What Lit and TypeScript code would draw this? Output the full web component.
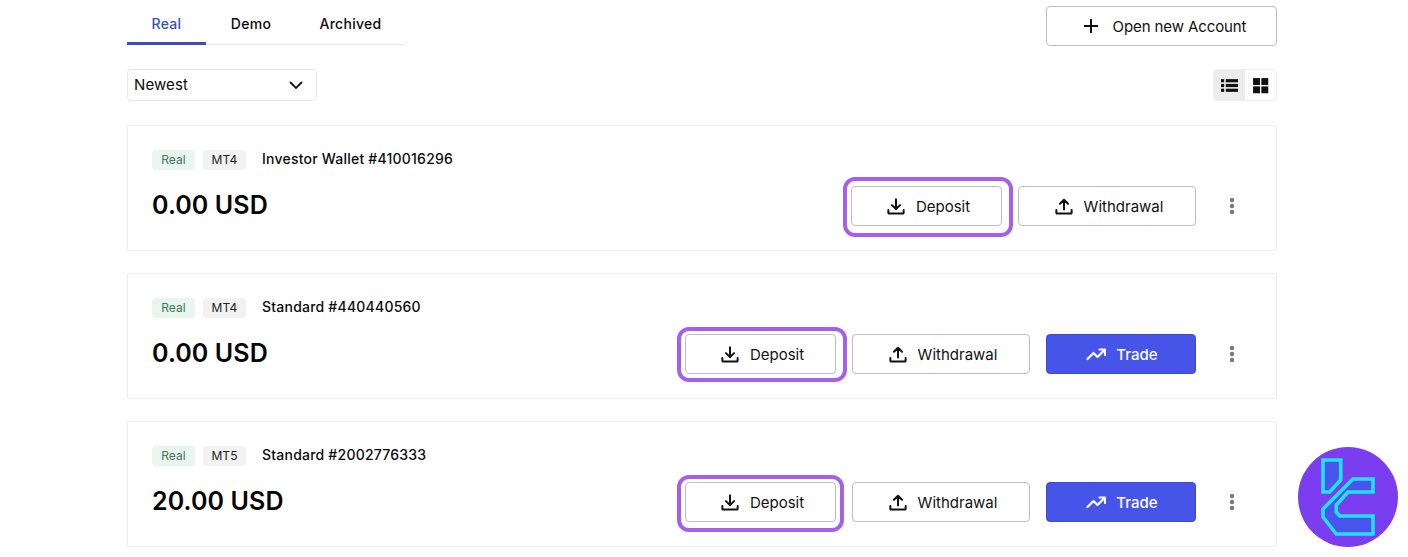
import { LitElement, html, css, svg } from "lit";
import { customElement } from "lit/decorators.js";

const downloadIcon = svg`<path d="M10 2.500v11M5.500 9l4.500 4.500L14.500 9M1.500 14.500V17.500a.8.8 0 0 0 .8.8h15.400a.8.8 0 0 0 .8-.8v-3" fill="none" stroke="currentColor" stroke-width="2.200" stroke-linecap="round" stroke-linejoin="round"/>`;
const uploadIcon = svg`<path d="M10 14V3M5.500 7.500L10 3l4.500 4.500M1.500 14.500V17.500a.8.8 0 0 0 .8.8h15.400a.8.8 0 0 0 .8-.8v-3" fill="none" stroke="currentColor" stroke-width="2.200" stroke-linecap="round" stroke-linejoin="round"/>`;
const trendIcon = svg`<path d="M1.500 15l6-6 4 4 7-7M13.500 5.500h5.500v5.500" fill="none" stroke="currentColor" stroke-width="2.200" stroke-linecap="round" stroke-linejoin="round"/>`;

interface Account {
  type: string;
  title: string;
  balance: string;
  trade: boolean;
  ringWidth: number;
  ringTall: number;
  ringTop: number;
}

const ACCOUNTS: Account[] = [
  { type: "MT4", title: "Investor Wallet #410016296", balance: "0.00 USD", trade: false, ringWidth: 170, ringTall: 60, ringTop: -9 },
  { type: "MT4", title: "Standard #440440560", balance: "0.00 USD", trade: true, ringWidth: 170, ringTall: 55, ringTop: -7 },
  { type: "MT5", title: "Standard #2002776333", balance: "20.00 USD", trade: true, ringWidth: 167, ringTall: 57, ringTop: -7 },
];

@customElement("app-root")
export class AppRoot extends LitElement {
  static styles = css`
    :host {
      display: block;
      position: relative;
      width: 1408px;
      height: 557px;
      overflow: hidden;
      background: #fff;
      color: #0b0b0b;
      font-family: Inter, "Noto Sans", sans-serif;
      font-size: 14px;
    }
    .page {
      display: flex;
      flex-direction: column;
      padding: 6px 131px 0 127px;
    }
    .top {
      display: flex;
      justify-content: space-between;
      align-items: flex-start;
    }
    .tabs {
      display: flex;
      width: 278px;
      height: 38px;
      border-bottom: 1px solid #e9e9e9;
      box-sizing: content-box;
    }
    .tab {
      height: 36px;
      line-height: 36px;
      text-align: center;
      font-weight: 500;
      font-size: 14px;
      letter-spacing: 0.3px;
    }
    .tab.real {
      width: 79px;
      color: #3d50b0;
      border-bottom: 3px solid #3d50b0;
      margin-bottom: -1px;
    }
    .tab.demo { width: 90px; }
    .tab.arch { width: 109px; }
    .btn {
      display: flex;
      align-items: center;
      justify-content: center;
      box-sizing: border-box;
      height: 40px;
      padding-left: 4px;
      border: 1px solid #bdbdbd;
      border-radius: 4px;
      background: #fff;
      gap: 11px;
      font-size: 15px;
      color: #111;
    }
    .btn svg { width: 18px; height: 18px; display: block; }
    .open {
      width: 231px;
      gap: 12px;
      letter-spacing: -0.1px;
    }
    .btn.open svg { width: 20px; height: 20px; }
    .controls {
      display: flex;
      justify-content: space-between;
      margin-top: 23px;
    }
    .select {
      display: flex;
      align-items: center;
      justify-content: space-between;
      box-sizing: border-box;
      width: 190px;
      height: 32px;
      padding: 0 12px 2px 6px;
      border: 1px solid #e7e7e7;
      border-radius: 4px;
      font-size: 15px;
      letter-spacing: 0.1px;
    }
    .select svg { width: 16px; height: 16px; margin-top: 2px; }
    .toggle {
      display: flex;
      box-sizing: border-box;
      width: 64px;
      height: 32px;
      border: 1px solid #efefef;
      border-radius: 4px;
      overflow: hidden;
    }
    .toggle div {
      flex: 1;
      display: flex;
      align-items: center;
      justify-content: center;
    }
    .toggle .on { background: #ececec; }
    .toggle svg { width: 17px; height: 17px; }
    .cards {
      display: flex;
      flex-direction: column;
      gap: 22px;
      margin-top: 24px;
    }
    .card {
      display: flex;
      justify-content: space-between;
      box-sizing: border-box;
      height: 126px;
      padding: 24px 24px 0;
      border: 1px solid #ececec;
      border-radius: 2px;
    }
    .info { display: flex; flex-direction: column; }
    .tags {
      display: flex;
      align-items: center;
      height: 20px;
    }
    .tag {
      display: flex;
      align-items: center;
      justify-content: center;
      box-sizing: border-box;
      width: 43px;
      height: 20px;
      padding-bottom: 1px;
      border-radius: 4px;
      font-size: 12px;
      letter-spacing: 0.1px;
      margin-right: 8px;
    }
    .tag.green { background: #e9f5ee; color: #3f7a5c; }
    .tag.gray { background: #f2f2f2; color: #222; }
    .title {
      margin-left: 8px;
      margin-top: -4px;
      font-size: 14px;
      font-weight: 500;
      letter-spacing: 0.22px;
      white-space: nowrap;
    }
    .balance {
      margin-top: 20px;
      font-size: 25px;
      line-height: 30px;
      font-weight: 600;
      letter-spacing: 0.1px;
      color: #050505;
    }
    .actions {
      display: flex;
      align-items: center;
      gap: 16px;
      height: 40px;
      margin-top: 36px;
    }
    .slot { position: relative; }
    .deposit { width: 151px; }
    .withdraw { width: 178px; }
    .btn.trade {
      width: 150px;
      padding-left: 2px;
      gap: 10px;
      background: #4655e8;
      border-color: #3d4bd0;
      color: #fff;
      font-weight: 500;
    }
    .btn.trade svg { width: 20px; height: 20px; }
    .ring {
      position: absolute;
      left: -8px;
      box-sizing: border-box;
      border: 4px solid #a65fe9;
      border-radius: 12px;
      pointer-events: none;
    }
    .dots {
      display: flex;
      justify-content: center;
      width: 40px;
    }
    .dots svg { width: 6px; height: 18px; }
    .logo {
      position: absolute;
      left: 1298px;
      top: 447px;
      width: 100px;
      height: 100px;
    }
  `;

  private card(a: Account) {
    return html`
      <div class="card">
        <div class="info">
          <div class="tags">
            <span class="tag green">Real</span>
            <span class="tag gray">${a.type}</span>
            <span class="title">${a.title}</span>
          </div>
          <div class="balance">${a.balance}</div>
        </div>
        <div class="actions">
          <div class="slot">
            <div class="btn deposit"><svg viewBox="0 0 20 20">${downloadIcon}</svg>Deposit</div>
            <div class="ring" style="top:${a.ringTop}px;width:${a.ringWidth}px;height:${a.ringTall}px"></div>
          </div>
          <div class="btn withdraw"><svg viewBox="0 0 20 20">${uploadIcon}</svg>Withdrawal</div>
          ${a.trade
            ? html`<div class="btn trade"><svg viewBox="0 0 20 20">${trendIcon}</svg>Trade</div>`
            : ""}
          <div class="dots">
            <svg viewBox="0 0 6 18"><g fill="#777"><circle cx="3" cy="3" r="2.200"/><circle cx="3" cy="9" r="2.200"/><circle cx="3" cy="15" r="2.200"/></g></svg>
          </div>
        </div>
      </div>
    `;
  }

  render() {
    return html`
      <div class="page">
        <div class="top">
          <div class="tabs">
            <div class="tab real">Real</div>
            <div class="tab demo">Demo</div>
            <div class="tab arch">Archived</div>
          </div>
          <div class="btn open">
            <svg viewBox="0 0 20 20"><path d="M10 3v14M3 10h14" stroke="#111" stroke-width="2" fill="none"/></svg>
            Open new Account
          </div>
        </div>
        <div class="controls">
          <div class="select">
            Newest
            <svg viewBox="0 0 16 16"><path d="M2 5l6 6 6-6" fill="none" stroke="#111" stroke-width="1.800"/></svg>
          </div>
          <div class="toggle">
            <div class="on">
              <svg viewBox="0 0 16 16"><g fill="#111"><rect x="0" y="2" width="3" height="3"/><rect x="4.500" y="2" width="11.500" height="3"/><rect x="0" y="6.500" width="3" height="3"/><rect x="4.500" y="6.500" width="11.500" height="3"/><rect x="0" y="11" width="3" height="3"/><rect x="4.500" y="11" width="11.500" height="3"/></g></svg>
            </div>
            <div>
              <svg viewBox="0 0 16 16"><g fill="#111"><rect x="1" y="1" width="6.500" height="6.500"/><rect x="8.800" y="1" width="6.500" height="6.500"/><rect x="1" y="8.800" width="6.500" height="6.500"/><rect x="8.800" y="8.800" width="6.500" height="6.500"/></g></svg>
            </div>
          </div>
        </div>
        <div class="cards">${ACCOUNTS.map((a) => this.card(a))}</div>
      </div>
      <svg class="logo" viewBox="0 0 100 100">
        <circle cx="50" cy="50" r="50" fill="#7a3ef0"/>
        <g fill="#4a55ee" stroke="#1fe3fa" stroke-width="3.600" stroke-linejoin="miter">
          <path d="M25 13H42.700V33L31.700 45H25Z"/>
          <path d="M75 32H55L25 62V70L38.300 87H75V69H41.700L38.300 65V58L50 45H75Z"/>
        </g>
      </svg>
    `;
  }
}
